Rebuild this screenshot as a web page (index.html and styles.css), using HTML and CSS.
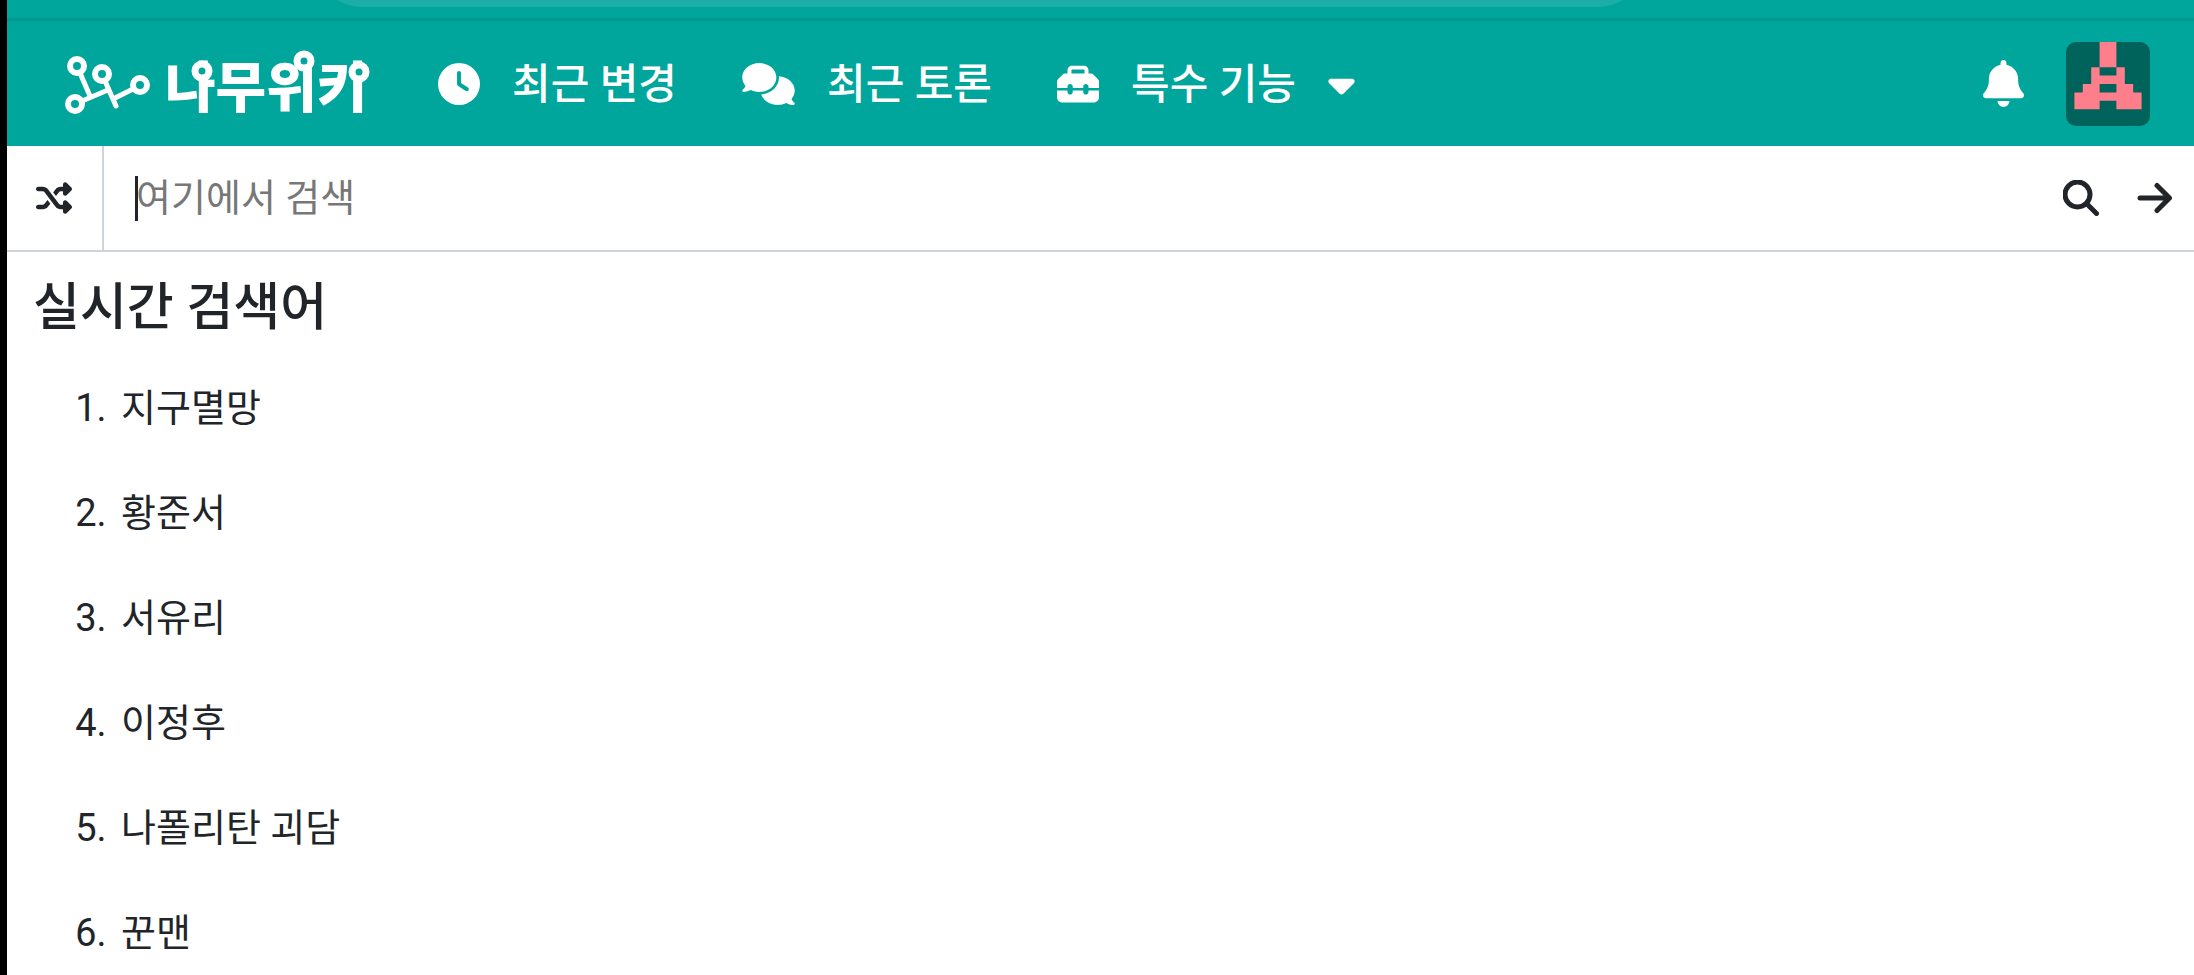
FILE: index.html
```
<!DOCTYPE html>
<html lang="ko">
<head>
    <meta charset="UTF-8">
    <meta name="viewport" content="width=device-width, initial-scale=1.0">
    <title>나무위키</title>
    <link rel="stylesheet" href="styles.css">
</head>
<body>
    <!-- Browser bar -->
    <div class="browser-bar">
        <div class="address-pill"></div>
    </div>

    <!-- Navigation Bar -->
    <header class="navbar">
        <a href="#" class="logo" aria-label="나무위키">
            <svg viewBox="0 -8 320 90" width="320" height="90">
                <g class="logo-mark">
                    <circle cx="17" cy="19" r="7"/>
                    <circle cx="42" cy="27" r="7"/>
                    <circle cx="80" cy="38" r="7"/>
                    <circle cx="15" cy="57" r="7"/>
                    <path d="M20 26L30 49M22 54L48 43M45 34L56 59M55 51L73 42"/>
                </g>
                <text class="logo-text" x="105" y="60">나무위키</text>
                <g class="logo-nodes">
                    <circle cx="142" cy="24" r="7"/>
                    <circle cx="244" cy="14" r="7"/>
                    <circle cx="299" cy="25" r="7"/>
                </g>
            </svg>
        </a>
        <nav>
            <ul class="menu">
                <li><a href="#">
                    <svg class="icon" viewBox="0 0 512 512"><path d="M256 0a256 256 0 1 1 0 512A256 256 0 1 1 256 0zM232 120V256c0 8 4 15.500 10.700 20l96 64c11 7.400 25.900 4.400 33.300-6.700s4.400-25.900-6.700-33.300L280 243.200V120c0-13.300-10.700-24-24-24s-24 10.700-24 24z"/></svg>
                    <span>최근 변경</span>
                </a></li>
                <li><a href="#">
                    <svg class="icon icon-wide" viewBox="0 0 640 512"><path d="M208 352c114.900 0 208-78.800 208-176S322.900 0 208 0S0 78.800 0 176c0 38.600 14.700 74.300 39.600 103.400c-3.500 9.400-8.700 17.700-14.200 24.700c-4.800 6.200-9.700 11-13.300 14.300c-1.800 1.600-3.300 2.900-4.300 3.700c-.5 .4-.9 .7-1.100 .8l-.2 .2C1 327.200-1.400 334.400 .8 340.900S9.100 352 16 352c21.800 0 43.800-5.600 62.100-12.500c9.200-3.500 17.800-7.400 25.300-11.400C134.100 343.300 169.800 352 208 352zM448 176c0 112.300-99.100 196.900-216.500 207C255.800 457.400 336.400 512 432 512c38.200 0 73.900-8.700 104.700-23.900c7.500 4 16 7.900 25.200 11.400c18.300 6.900 40.300 12.500 62.100 12.500c6.900 0 13.100-4.500 15.200-11.100c2.100-6.600-.2-13.800-5.800-17.900l-.2-.2c-.2-.2-.6-.4-1.100-.8c-1-.8-2.500-2-4.300-3.700c-3.600-3.300-8.500-8.100-13.300-14.300c-5.500-7-10.700-15.400-14.200-24.700c24.900-29 39.600-64.700 39.600-103.400c0-92.800-84.900-168.900-192.600-175.500c.4 5.100 .6 10.300 .6 15.500z"/></svg>
                    <span>최근 토론</span>
                </a></li>
                <li><a href="#">
                    <svg class="icon" viewBox="0 0 512 512"><path d="M176 88v40H336V88c0-4.400-3.600-8-8-8H184c-4.400 0-8 3.600-8 8zm-48 40V88c0-30.900 25.100-56 56-56H328c30.900 0 56 25.100 56 56v40h28.100c12.700 0 24.900 5.100 33.900 14.100l51.900 51.900c9 9 14.100 21.200 14.100 33.900V304H384V288c0-17.700-14.300-32-32-32s-32 14.300-32 32v16H192V288c0-17.700-14.300-32-32-32s-32 14.300-32 32v16H0V227.900c0-12.700 5.100-24.900 14.100-33.900l51.900-51.900c9-9 21.200-14.100 33.900-14.100H128zM0 416V336H128v16c0 17.700 14.300 32 32 32s32-14.300 32-32V336H320v16c0 17.700 14.300 32 32 32s32-14.300 32-32V336H512v80c0 35.300-28.700 64-64 64H64c-35.300 0-64-28.700-64-64z"/></svg>
                    <span>특수 기능</span>
                    <svg class="icon icon-caret" viewBox="0 0 320 512"><path d="M137.400 374.600c12.500 12.500 32.800 12.500 45.300 0l128-128c9.200-9.200 11.900-22.900 6.900-34.900s-16.600-19.800-29.600-19.800L32 192c-12.900 0-24.600 7.800-29.600 19.800s-2.200 25.700 6.900 34.900l128 128z"/></svg>
                </a></li>
            </ul>
        </nav>
        <div class="user-area">
            <button type="button" class="bell-button" aria-label="알림">
                <svg viewBox="0 0 448 512" width="41" height="47"><path d="M224 0c-17.700 0-32 14.300-32 32V51.200C119 66 64 130.600 64 208v18.800c0 47-17.300 92.400-48.500 127.600l-7.400 8.300c-8.400 9.400-10.400 22.900-5.300 34.400S19.400 416 32 416H416c12.600 0 24-7.400 29.200-18.900s3.100-25-5.300-34.400l-7.400-8.300C401.300 319.200 384 273.900 384 226.800V208c0-77.400-55-142-128-156.800V32c0-17.700-14.300-32-32-32zm45.300 493.300c12-12 18.700-28.300 18.700-45.300H224 160c0 17 6.700 33.300 18.700 45.300s28.300 18.700 45.300 18.700s33.300-6.700 45.300-18.700z"/></svg>
            </button>
            <button type="button" class="avatar" aria-label="내 계정">
                <svg viewBox="0 0 10 10" width="84" height="84"><path d="M4 0h2v3h1v2h1v1h1v2H6V7H4v1H1V6h1V5h1V3h1zM4 3v1h2V3zM4 5v1h2V5z"/></svg>
            </button>
        </div>
    </header>

    <!-- Search Form -->
    <form class="search-bar">
        <button type="button" class="random-button" aria-label="임의 문서">
            <svg viewBox="0 0 512 512" width="36" height="36"><path d="M403.800 34.400c12-5 25.700-2.200 34.900 6.900l64 64c6 6 9.400 14.100 9.400 22.600s-3.400 16.600-9.400 22.600l-64 64c-9.200 9.200-22.900 11.900-34.900 6.900s-19.800-16.600-19.800-29.600V160H352c-10.100 0-19.600 4.700-25.600 12.800L284 229.300 244 176l31.200-41.600C293.300 110.200 321.800 96 352 96h32V64c0-12.900 7.800-24.600 19.800-29.600zM164 282.700L204 336l-31.200 41.600C154.700 401.800 126.200 416 96 416H32c-17.700 0-32-14.300-32-32s14.300-32 32-32H96c10.100 0 19.600-4.700 25.600-12.800L164 282.700zm274.600 188c-9.200 9.200-22.900 11.900-34.900 6.900s-19.800-16.600-19.800-29.600V416H352c-30.200 0-58.700-14.200-76.800-38.400L121.600 172.800c-6-8.100-15.500-12.800-25.600-12.800H32c-17.700 0-32-14.300-32-32s14.300-32 32-32H96c30.200 0 58.700 14.200 76.800 38.400L326.400 339.200c6 8.100 15.500 12.800 25.600 12.800h32V320c0-12.900 7.800-24.600 19.800-29.600s25.700-2.200 34.900 6.900l64 64c6 6 9.400 14.100 9.400 22.600s-3.400 16.600-9.400 22.600l-64 64z"/></svg>
        </button>
        <span class="caret"></span>
        <input type="text" class="search-input" placeholder="여기에서 검색" aria-label="여기에서 검색">
        <button type="submit" class="search-button" aria-label="검색">
            <svg class="line-icon" viewBox="0 0 36 36" width="36" height="36"><circle cx="14.500" cy="14.500" r="12.500"/><path d="M23.500 23.500L33.500 33.500"/></svg>
        </button>
        <button type="button" class="search-button" aria-label="이동">
            <svg class="line-icon" viewBox="0 0 36 36" width="36" height="36"><path d="M3 18H32M20 5.500L32.500 18L20 30.500"/></svg>
        </button>
    </form>

    <!-- Trending list -->
    <main class="trending">
        <h2>실시간 검색어</h2>
        <ol>
            <li><a href="#">지구멸망</a></li>
            <li><a href="#">황준서</a></li>
            <li><a href="#">서유리</a></li>
            <li><a href="#">이정후</a></li>
            <li><a href="#">나폴리탄 괴담</a></li>
            <li><a href="#">꾼맨</a></li>
        </ol>
    </main>
</body>
</html>
```
FILE: styles.css
```
/* Global Styles */
* {
    box-sizing: border-box;
}

body {
    margin: 0;
    min-height: 100vh;
    border-left: 7px solid #000000;
    background-color: #ffffff;
    color: #212529;
    font-family: Roboto, 'Noto Sans CJK KR', sans-serif;
    font-size: 38px;
}

a {
    color: inherit;
    text-decoration: none;
}

button {
    margin: 0;
    padding: 0;
    border: none;
    background: none;
    color: inherit;
}

svg {
    display: block;
    fill: currentColor;
}

/* Browser bar */
.browser-bar {
    height: 21px;
    overflow: hidden;
    background-color: #00a69c;
    border-bottom: 3px solid #00978e;
}

.address-pill {
    width: 61%;
    height: 100px;
    margin: -93px 0 0 14%;
    border-radius: 50px;
    background-color: #1baea6;
}

/* Navigation Bar */
.navbar {
    display: flex;
    align-items: center;
    height: 125px;
    padding: 0 44px 0 53px;
    background-color: #00a69c;
    color: #ffffff;
}

.logo {
    margin-right: 58px;
}

.logo-mark {
    fill: none;
    stroke: #ffffff;
    stroke-width: 6;
    stroke-linecap: round;
}

.logo-mark path {
    stroke-width: 5;
}

.logo-text {
    font-family: 'Noto Sans CJK KR', sans-serif;
    font-size: 55px;
    font-weight: 900;
}

.logo-nodes {
    fill: #00a69c;
    stroke: #ffffff;
    stroke-width: 7;
}

.menu {
    display: flex;
    gap: 65px;
    margin: 0;
    padding: 0;
    list-style: none;
}

.menu a {
    display: flex;
    align-items: center;
    gap: 32px;
    font-size: 42px;
    font-weight: 500;
    line-height: 60px;
    white-space: nowrap;
}

.menu span {
    padding-top: 2px;
}

.icon {
    width: 42px;
    height: 42px;
}

.icon-wide {
    width: 53px;
}

.icon-caret {
    width: 27px;
}

.user-area {
    display: flex;
    align-items: center;
    gap: 42px;
    margin-left: auto;
}

.avatar {
    overflow: hidden;
    border-radius: 10px;
    background-color: #00635b;
    color: #ff7e8c;
}

.avatar path {
    fill-rule: evenodd;
}

/* Search Bar */
.search-bar {
    display: flex;
    align-items: center;
    height: 106px;
    padding-right: 21px;
    border-bottom: 2px solid #ced4da;
}

.random-button {
    display: flex;
    align-items: center;
    align-self: stretch;
    padding: 0 30px 0 29px;
    border-right: 2px solid #ced4da;
}

.caret {
    width: 3px;
    height: 45px;
    margin: 0 -2px 0 31px;
    background-color: #212529;
}

.search-input {
    flex: 1;
    min-width: 0;
    padding: 0;
    border: none;
    outline: none;
    background: none;
    color: inherit;
    font: inherit;
}

.search-input::placeholder {
    color: #777777;
    opacity: 1;
}

.search-button {
    margin-left: 38px;
}

.line-icon {
    fill: none;
    stroke: currentColor;
    stroke-width: 5;
    stroke-linecap: round;
    stroke-linejoin: round;
}

/* Trending list */
.trending h2 {
    margin: 0;
    padding: 20px 26px 12px;
    font-size: 51px;
    font-weight: 500;
    line-height: 72px;
}

.trending ol {
    margin: 0;
    padding: 0 0 0 109px;
}

.trending li {
    padding: 24px 0 24px 5px;
    line-height: 57px;
}

.trending li:last-child {
    padding-bottom: 0;
}
```
